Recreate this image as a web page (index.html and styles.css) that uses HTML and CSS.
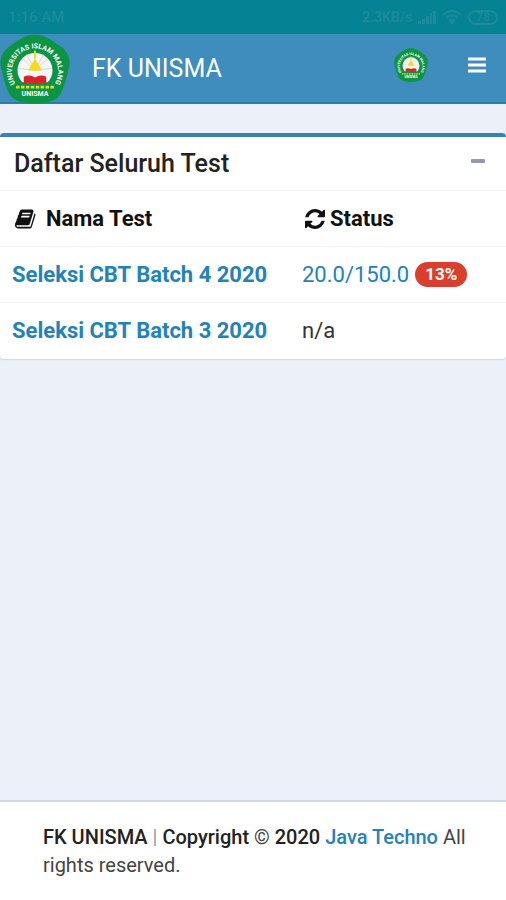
FILE: index.html
```html
<!DOCTYPE html>
<html lang="id">
<head>
<meta charset="utf-8">
<meta name="viewport" content="width=device-width, initial-scale=1">
<title>FK UNISMA</title>
<link rel="stylesheet" href="styles.css">
</head>
<body>
<div class="status-bar">
  <span>1:16 AM</span>
  <span class="status-info">
    <span>2.3KB/s</span>
    <svg width="18" height="14" viewBox="0 0 18 14"><path d="M0 14v-3h3v3ZM4 14V9h3v5ZM8 14V6h3v8ZM12 14V3h2v11ZM15 14V1h3v13Z" fill="currentColor"/></svg>
    <svg width="20" height="14" viewBox="0 0 20 14"><path d="M1 5q9-8 18 0M4 8q6-5 12 0M7 11q3-2 6 0" fill="none" stroke="currentColor" stroke-width="2"/><circle cx="10" cy="12" r="2" fill="currentColor"/></svg>
    <span class="battery">78</span>
  </span>
</div>
<header class="navbar">
  <a class="brand" href="#"><svg class="logo" viewBox="0 0 100 100" aria-hidden="true">
    <g id="crest">
      <path d="M50 1C66 1 73 9 84 16C97 24 102 36 98 50C95 62 93 73 87 85C81 96 68 99 50 99C32 99 19 96 13 85C7 73 5 62 2 50C-2 36 3 24 16 16C27 9 34 1 50 1Z" fill="#0b9444"/>
      <circle cx="50" cy="52" r="25" fill="#f4f7f5"/>
      <path d="M50 27v25M32 35l18 17 18-17M26 49l24 3 24-3M38 29l12 23 12-23" fill="none" stroke="#c5cccd" stroke-width="1"/>
      <path d="M50 35 60 52H40Z" fill="#f6dc18"/>
      <path d="M50 24v11" stroke="#f6dc18" stroke-width="3"/>
      <path d="M23 69h54v10H23Z" fill="#0b9444"/>
      <path d="M34 61q8-4 16 1 8-5 16-1v10q-8-3-16 0-8-3-16 0Z" fill="#e02027"/>
      <path d="M23 76h54" stroke="#eadb2b" stroke-width="4" stroke-dasharray="5 2"/>
      <path id="crest-arc" d="M22 71A33 33 0 1 1 78 71" fill="none"/>
      <text class="crest-text"><textPath href="#crest-arc">UNIVERSITAS ISLAM MALANG</textPath></text>
      <text class="crest-text" x="50" y="88" text-anchor="middle">UNISMA</text>
    </g>
  </svg>FK UNISMA</a>
  <nav class="nav-actions">
    <a class="user" href="#" aria-label="Profil"><svg viewBox="0 0 100 100"><use href="#crest"/></svg></a>
    <button class="menu" type="button" aria-label="Menu"><svg width="18" height="16" viewBox="0 0 18 16"><path d="M0 2h18M0 8h18M0 14h18" stroke="currentColor" stroke-width="3"/></svg></button>
  </nav>
</header>
<main>
  <section class="box">
    <div class="box-header">
      <h1>Daftar Seluruh Test</h1>
      <button class="collapse" type="button" aria-label="Ciutkan"><svg width="14" height="4" viewBox="0 0 14 4"><rect width="14" height="4" rx="1" fill="currentColor"/></svg></button>
    </div>
    <table>
      <thead>
        <tr>
          <th scope="col"><span class="label"><svg width="22" height="22" viewBox="0 0 1792 1792"><path fill="currentColor" d="M1639 478q40 57 18 129l-275 906q-19 64-76.500 107.500t-122.500 43.500h-923q-77 0-148.500-53.500t-99.500-131.500q-24-67-2-127 0-4 3-27t4-37q1-8-3-21.500t-3-19.500q2-11 8-21t16.500-23.500 16.500-23.500q23-38 45-91.500t30-91.500q3-10 .5-30t-.5-28q3-11 17-28t17-23q21-36 42-92t25-90q1-9-2.500-32t.5-28q4-13 22-30.500t22-22.500q19-26 42.500-84.500t27.500-96.500q1-8-3-25.500t-2-26.500q2-8 9-18t18-23 17-21q8-12 16.500-30.500t15-35 16-36 19.500-32 26.500-23.500 36-11.500 47.500 5.500l-1 3q38-9 51-9h761q74 0 114 56t18 130l-274 906q-36 119-71.500 153.500t-128.500 34.500h-869q-27 0-38 15-11 16-1 43 24 70 144 70h923q29 0 56-15.500t35-41.500l300-987q7-22 5-57 38 15 59 43zm-1064 2q-4 13 2 22.500t20 9.500h608q13 0 25.500-9.500t16.500-22.500l21-64q4-13-2-22.500t-20-9.500h-608q-13 0-25.500 9.500t-16.500 22.500zm-83 256q-4 13 2 22.500t20 9.500h608q13 0 25.500-9.500t16.500-22.500l21-64q4-13-2-22.500t-20-9.500h-608q-13 0-25.500 9.500t-16.500 22.500z"/></svg>Nama Test</span></th>
          <th scope="col"><span class="label label-tight"><svg width="20" height="20" viewBox="0 0 1536 1536"><path fill="currentColor" d="M1511 928q0 5-1 7-64 268-268 434.500T764 1536q-146 0-282.500-55T238 1324l-129 129q-19 19-45 19t-45-19-19-45V960q0-26 19-45t45-19h448q26 0 45 19t19 45-19 45l-137 137q71 66 161 102t187 36q134 0 250-65t186-179q11-17 53-117 8-23 30-23h192q13 0 22.500 9.500t9.500 22.500zm25-800v448q0 26-19 45t-45 19h-448q-26 0-45-19t-19-45 19-45l138-138Q969 256 768 256q-134 0-250 65T332 500q-11 17-53 117-8 23-30 23H50q-13 0-22.500-9.500T18 608v-7q65-268 270-434.500T768 0q146 0 284 55.500T1297 212l130-129q19-19 45-19t45 19 19 45z"/></svg>Status</span></th>
        </tr>
      </thead>
      <tbody>
        <tr>
          <td><a class="test" href="#">Seleksi CBT Batch 4 2020</a></td>
          <td><a class="score" href="#">20.0/150.0 <span class="badge">13%</span></a></td>
        </tr>
        <tr>
          <td><a class="test" href="#">Seleksi CBT Batch 3 2020</a></td>
          <td>n/a</td>
        </tr>
      </tbody>
    </table>
  </section>
</main>
<footer>
  <p><strong>FK UNISMA</strong> <span class="divider">|</span> <strong>Copyright</strong> © <strong>2020 <a href="#">Java Techno</a></strong> All rights reserved.</p>
</footer>
</body>
</html>
```

FILE: styles.css
```css
* { box-sizing: border-box; }

body {
  margin: 0;
  min-height: 100vh;
  display: flex;
  flex-direction: column;
  background: #ecf0f8;
  color: #333;
  font-family: Roboto, "Liberation Sans", sans-serif;
  font-size: 22px;
  line-height: 28px;
}

a { color: #2482b8; text-decoration: none; }
button { padding: 0; border: 0; background: none; cursor: pointer; }
svg { display: block; flex: none; }
.crest-text { font-size: 10px; font-weight: 700; fill: #fff; }

.status-bar {
  display: flex;
  justify-content: space-between;
  align-items: center;
  height: 34px;
  padding: 0 8px;
  background: #058294;
  color: #1c8b9c;
  font-size: 15px;
  font-weight: 500;
}
.status-info { display: flex; align-items: center; gap: 6px; font-size: 14px; }
.battery {
  padding: 0 6px;
  border: 2px solid;
  border-radius: 8px;
  font-size: 12px;
  line-height: 11px;
}

.navbar {
  display: flex;
  justify-content: space-between;
  height: 70px;
  padding: 2px 20px 0 0;
  background: #3e8dbd;
  border-bottom: 2px solid #2580b2;
  color: #fff;
}
.brand {
  display: flex;
  align-items: center;
  gap: 22px;
  color: #fff;
  font-size: 25px;
}
.logo { width: 70px; height: 70px; }
.nav-actions { display: flex; align-items: center; gap: 40px; padding-bottom: 8px; }
.user svg { width: 34px; height: 34px; }
.menu { color: #fff; }

main { flex: 1; padding-top: 29px; }
.box {
  background: #fff;
  border-top: 4px solid #3584b3;
  border-radius: 4px;
  box-shadow: 0 1px 1px #d5d8de;
}
.box-header {
  display: flex;
  justify-content: space-between;
  align-items: center;
  height: 53px;
  padding: 0 21px 0 14px;
}
.collapse { color: #9797ad; padding-bottom: 6px; }
h1 { margin: 0; color: #222; font-size: 25px; font-weight: 500; }

table { width: 100%; border-collapse: collapse; }
th, td {
  height: 56px;
  padding: 0 12px;
  border-top: 1px solid #f4f4f4;
  text-align: left;
  white-space: nowrap;
}
th:first-child, td:first-child { width: 290px; }
th { color: #111; font-weight: 700; padding-left: 15px; }
.label { display: flex; align-items: center; gap: 9px; }
.label-tight { gap: 5px; }
.test { font-weight: 700; }
.score { display: flex; align-items: center; gap: 6px; }
.badge {
  padding: 0 10px;
  border-radius: 13px;
  background: #da3e2d;
  color: #fff;
  font-size: 17px;
  font-weight: 700;
  line-height: 25px;
}

footer {
  min-height: 100px;
  padding: 21px 30px 21px 43px;
  border-top: 2px solid #d2d6e2;
  background: #fff;
  color: #444;
  font-size: 20px;
}
footer p { margin: 0; }
footer strong { color: #222; font-weight: 500; }
.divider { color: #999; }
```
